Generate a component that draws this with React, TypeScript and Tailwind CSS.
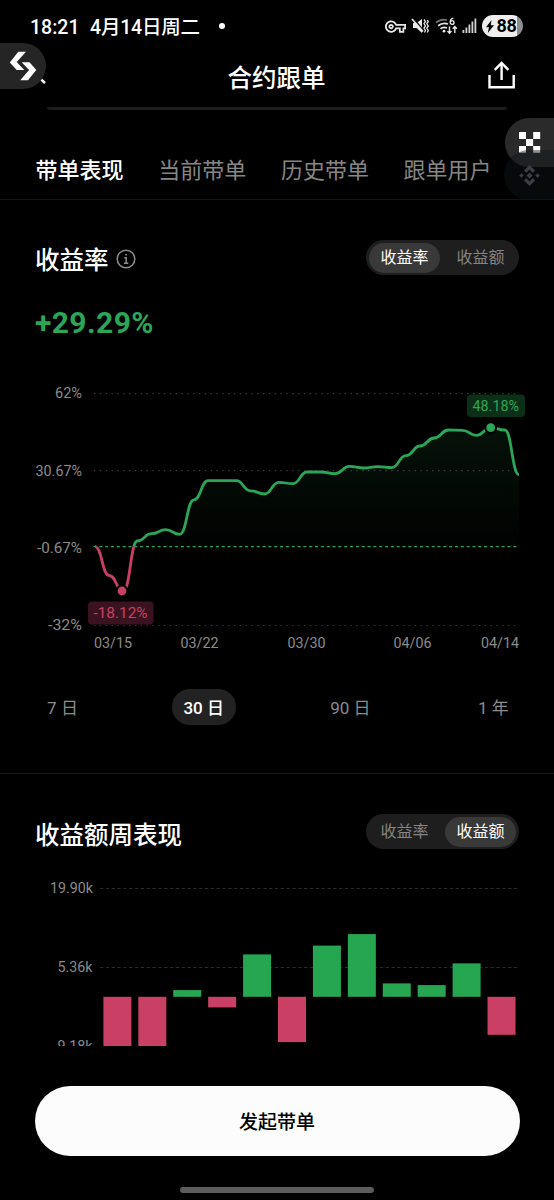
import { useState } from "react";
import { MdOutlineVpnKey } from "react-icons/md";

const GREEN = "#2ba656";
const PINK = "#c94064";

const tabs = ["带单表现", "当前带单", "历史带单", "跟单用户"];

// y position of the curve for each day, 03/15 - 04/14
const curve = [
  546.7, 575.5, 591, 541, 533.7, 529.7, 534.3, 499.8, 480.7, 480.7, 480.7,
  490.8, 494, 482.3, 483.7, 472, 472, 473.7, 466.3, 468, 466.7, 467.7, 455.6,
  446, 438, 430, 430.3, 435.3, 427.7, 430, 474.7,
];

const CHART_LEFT = 95;
const STEP = (519 - CHART_LEFT) / (curve.length - 1);
const ZERO_Y = 546.6;

const linePath = curve
  .map((y, i) => {
    const x = CHART_LEFT + i * STEP;
    if (i === 0) return `M${x} ${y}`;
    const mid = x - STEP / 2;
    return `C${mid} ${curve[i - 1]} ${mid} ${y} ${x} ${y}`;
  })
  .join(" ");

const yLabels = [
  { text: "62%", x: 55, width: 27, y: 398.3, line: 393.7 },
  { text: "30.67%", x: 35.5, width: 46.5, y: 475.8, line: 470.7 },
  { text: "-0.67%", x: 37, width: 45, y: 552.5, line: 0 },
  { text: "-32%", x: 48, width: 34, y: 630.2, line: 625.5 },
];

const xLabels = [
  { text: "03/15", x: 94 },
  { text: "03/22", x: 180.5 },
  { text: "03/30", x: 287.5 },
  { text: "04/06", x: 393.5 },
  { text: "04/14", x: 481 },
];

const periods = [
  { label: "7 日", box: "w-[61px]" },
  { label: "30 日", box: "w-[64px]" },
  { label: "90 日", box: "w-[64px]" },
  { label: "1 年", box: "w-[61px]" },
];

// positive values go up from the zero line, negative go down
const bars = [-60, -60, 6.7, -10.6, 42.4, -45.3, 51.2, 62.7, 13.4, 11.7, 33.4, -38];

function StatusBar() {
  return (
    <div className="flex h-[52px] items-center pl-[30px] pr-[31px]">
      <span className="mt-[4px] w-[60px] whitespace-pre text-[19.5px] font-medium">18:21</span>
      <span className="mt-[4px] whitespace-nowrap text-[19.5px] font-medium tracking-[-0.2px]">4月14日周二</span>
      <span className="ml-[19px] h-1.5 w-1.5 rounded-full bg-white" />
      <div className="ml-auto flex items-center">
        <MdOutlineVpnKey className="h-[21px] w-[21px] text-[#e8e8e8]" />
        <svg className="ml-[5px]" width="18" height="18" viewBox="0 0 18 18" fill="none">
          <path d="M2 6h3.5L11 2v14l-5.500-5H2z" fill="#e8e8e8" />
          <path d="M2.500 1.500l10 12" stroke="#000" strokeWidth="1.500" />
          <path d="M1 2l11 12.500" stroke="#e8e8e8" strokeWidth="1.700" />
          <path d="M13 2.500l1.500 2-1.500 2 1.500 2.500-1.500 2 1.500 2.500-1 2M16.300 3l1 1.500-1.500 2 1.500 2.500-1.500 2 1.500 2.500-1 2" stroke="#e8e8e8" strokeWidth="1.300" />
        </svg>
        <svg className="ml-[6px]" width="23" height="20" viewBox="0 0 23 20" fill="none">
          <path d="M1 6.500Q6 2.600 12 4" stroke="#777" strokeWidth="1.700" />
          <path d="M3.200 9.800Q7.500 6.200 13 8M5.500 12.800Q8.500 10.500 12 12" stroke="#e8e8e8" strokeWidth="1.800" />
          <circle cx="9" cy="15.200" r="1.400" fill="#e8e8e8" />
          <path d="M18.500 2.400Q15.500 2 15.200 6M15.200 6.500a1.900 1.900 0 1 0 3.800 0a1.900 1.900 0 1 0-3.800 0" stroke="#e8e8e8" strokeWidth="1.400" />
          <path d="M14.500 10.500v6.500M12.500 15l2 2.200 2-2.200M19.800 17v-6.300M17.800 12.700l2-2.200 2 2.200" stroke="#e8e8e8" strokeWidth="1.400" />
        </svg>
        <svg className="ml-[4px]" width="15" height="16" viewBox="0 0 15 16" fill="#d0d0d0">
          <rect x="0.500" y="12" width="1.800" height="3" />
          <rect x="3.500" y="9.500" width="1.800" height="5.500" />
          <rect x="6.500" y="6.500" width="1.800" height="8.500" />
          <rect x="9.500" y="3.500" width="1.800" height="11.500" />
          <rect x="12.500" y="0.500" width="1.800" height="14.500" />
        </svg>
        <div className="ml-[5px] flex h-[22px] w-[41px] items-center rounded-full bg-[linear-gradient(90deg,#efefef_35px,#8e8e8e_35px)] pl-[3.500px] text-black">
          <svg width="8" height="13" viewBox="0 0 8 13" fill="#000">
            <path d="M5.500 0L0 7.300h3L1.800 13 8 5.300H4.800z" />
          </svg>
          <span className="ml-[3px] text-[18px] font-bold leading-none tracking-[-0.3px]">88</span>
        </div>
      </div>
    </div>
  );
}

function Toggle({ value, onChange }: { value: number; onChange: (v: number) => void }) {
  return (
    <div className="flex h-[35px] w-[153px] items-center justify-between rounded-full bg-[#1e1e1e] px-[3px] text-[16px]">
      {["收益率", "收益额"].map((label, i) => (
        <button
          key={label}
          onClick={() => onChange(i)}
          className={`h-[30px] w-[71px] rounded-full leading-[30px] ${
            value === i ? "bg-[#393939] text-white" : "text-[#858585]"
          }`}
        >
          {label}
        </button>
      ))}
    </div>
  );
}

function ReturnChart() {
  return (
    <svg width="554" height="280" viewBox="0 380 554 280" className="block" fontSize="15" fill="#8b8b8b">
      <defs>
        <clipPath id="above">
          <rect x="93" y="380" width="426.500" height={ZERO_Y - 380} />
        </clipPath>
        <clipPath id="below">
          <rect x="93" y={ZERO_Y} width="426.500" height="80" />
        </clipPath>
        <linearGradient id="area" gradientUnits="userSpaceOnUse" x1="0" y1="428" x2="0" y2={ZERO_Y}>
          <stop offset="0" stopColor={GREEN} stopOpacity="0.110" />
          <stop offset="1" stopColor={GREEN} stopOpacity="0.010" />
        </linearGradient>
      </defs>

      {yLabels.map((l) => (
        <g key={l.text}>
          <text x={l.x} y={l.y} textLength={l.width} lengthAdjust="spacingAndGlyphs">{l.text}</text>
          {l.line > 0 && (
            <line x1="94" x2="519" y1={l.line} y2={l.line} stroke="#3a3a3a" strokeWidth="1.200" strokeDasharray="1.400 4.430" />
          )}
        </g>
      ))}

      <path d={`${linePath} V${ZERO_Y} H${CHART_LEFT} Z`} fill="url(#area)" clipPath="url(#above)" />
      <line x1="93.500" x2="519" y1={ZERO_Y} y2={ZERO_Y} stroke={GREEN} strokeWidth="1.400" strokeDasharray="3 2.830" />
      <path d={linePath} fill="none" stroke={GREEN} strokeWidth="2.800" clipPath="url(#above)" />
      <path d={linePath} fill="none" stroke={PINK} strokeWidth="2.800" clipPath="url(#below)" />

      <circle cx="122" cy="591" r="5.400" fill={PINK} stroke="#000" strokeWidth="2" />
      <circle cx="490.700" cy="427.700" r="5.400" fill={GREEN} stroke="#000" strokeWidth="2" />

      <rect x="88" y="601.500" width="65.500" height="23" rx="4" fill="#3b1320" />
      <text x="93.500" y="618.300" fill={PINK} textLength="54" lengthAdjust="spacingAndGlyphs">-18.12%</text>
      <rect x="467" y="394.500" width="58" height="22.500" rx="4" fill="#0c2f18" />
      <text x="472.500" y="411.200" fill={GREEN} textLength="46.500" lengthAdjust="spacingAndGlyphs">48.18%</text>

      {xLabels.map((l) => (
        <text key={l.text} x={l.x} y="647.500" textLength="38" lengthAdjust="spacingAndGlyphs">{l.text}</text>
      ))}
    </svg>
  );
}

function WeeklyChart() {
  return (
    <svg width="554" height="165.500" viewBox="0 880 554 165.500" className="block" fontSize="15" fill="#8b8b8b">
      <text x="50" y="893.300" textLength="43" lengthAdjust="spacingAndGlyphs">19.90k</text>
      <text x="57.500" y="972.300" textLength="35" lengthAdjust="spacingAndGlyphs">5.36k</text>
      <text x="57.500" y="1051" textLength="35" lengthAdjust="spacingAndGlyphs">9.18k</text>
      {[888.5, 967.5].map((y) => (
        <line key={y} x1="100" x2="519" y1={y} y2={y} stroke="#292929" strokeDasharray="3.300 2.530" />
      ))}
      {bars.map((v, i) => (
        <rect
          key={i}
          x={103.4 + i * 34.92}
          y={v > 0 ? 996.8 - v : 996.8}
          width="28"
          height={Math.abs(v)}
          fill={v > 0 ? "#27a652" : PINK}
        />
      ))}
    </svg>
  );
}

function FloatingButtons() {
  return (
    <>
      <div className="absolute left-0 top-[43px] h-[46px] w-[46px] rounded-r-full bg-[#252525]">
        <svg width="46" height="46" viewBox="0 43 46 46" fill="#fff">
          <path d="M18.300 51.700H26L16.700 62l7.600 8h-7.600L9.800 62.400z" />
          <path d="M21.700 62.200h7.800l6.800 7.700L28 80.300h-7.800l8.900-10.200z" />
        </svg>
      </div>
      <div className="absolute right-0 top-[118px] h-[49px] w-[49px] rounded-l-full bg-[#2a2a2a]">
        <svg className="ml-[13.500px] mt-[14px]" width="22" height="21" viewBox="0 0 22 21" fill="#fff">
          <path d="M0 0h7v7H0zM14.200 0h7v7h-7zM7.100 7h7v7h-7zM0 14h7v6.800H0zM14.200 14h7v6.800h-7z" />
        </svg>
      </div>
      <div className="absolute right-0 top-[150px] h-[50px] w-[50px] rounded-l-full bg-[#101317]/45">
        <svg className="ml-[15px] mt-[15px]" width="21" height="21" viewBox="0 0 21 21" fill="#3a3e45">
          <path d="M10.500 0l5.600 5.600-2.300 2.300-3.300-3.300-3.300 3.300-2.300-2.300zM10.500 21l5.600-5.600-2.300-2.300-3.300 3.300-3.300-3.300-2.300 2.300zM2.500 8.200l2.300 2.300-2.300 2.300L.2 10.500zM18.500 8.200l2.300 2.300-2.300 2.300-2.300-2.300zM10.500 7.500l3 3-3 3-3-3z" />
        </svg>
      </div>
    </>
  );
}

export default function App() {
  const [tab, setTab] = useState(0);
  const [rateMode, setRateMode] = useState(0);
  const [weekMode, setWeekMode] = useState(1);
  const [period, setPeriod] = useState(1);

  return (
    <div className="relative flex h-[1200px] w-[554px] flex-col overflow-hidden bg-black font-[Roboto,'Noto_Sans_CJK_SC',sans-serif] text-white">
      <StatusBar />

      <header className="flex h-[55px] items-start justify-between pl-[38px] pr-[39px]">
        <svg className="mt-[7px]" width="28" height="30" viewBox="0 0 28 30" fill="none">
          <path d="M-4 14l11 10" stroke="#fff" strokeWidth="2.500" />
        </svg>
        <h1 className="mt-[9px] text-[24.500px] font-medium leading-[36px]">合约跟单</h1>
        <svg className="mt-[8px]" width="28" height="30" viewBox="0 0 28 30" fill="none" stroke="#fff" strokeWidth="2.400">
          <path d="M2.500 15v12.300h24.200V15M14.600 20V3M7.800 9.800l6.800-6.800 6.800 6.800" />
        </svg>
      </header>
      <div className="mx-[47px] h-[3px] shrink-0 rounded-b-full bg-[#1c1c1c]" />

      <nav className="flex h-[90px] shrink-0 items-end gap-[34.700px] border-b border-[#141414] pb-[12px] pl-[35.500px] text-[22px] leading-[32px]">
        {tabs.map((t, i) => (
          <button
            key={t}
            onClick={() => setTab(i)}
            className={`whitespace-nowrap ${tab === i ? "font-medium text-white" : "text-[#868686]"}`}
          >
            {t}
          </button>
        ))}
      </nav>

      <section className="flex h-[574px] shrink-0 flex-col border-b border-[#191919]">
        <div className="mt-[40px] flex h-[35px] items-center justify-between pl-[35px] pr-[35px]">
          <div className="flex items-center">
            <h2 className="mt-[6px] text-[24.500px] font-medium leading-[36px]">收益率</h2>
            <svg className="ml-[7px] mt-[3px]" width="20" height="20" viewBox="0 0 20 20" fill="none" stroke="#8d8d8d" strokeWidth="1.500">
              <circle cx="10" cy="10" r="8.800" />
              <path d="M8.200 8.800h2v5.400M8 14.200h4.300M9.200 5.800h1.800" />
            </svg>
          </div>
          <Toggle value={rateMode} onChange={setRateMode} />
        </div>
        <div className="mt-[28px] h-[41px] pl-[35px] text-[30px] font-bold leading-[40px] tracking-[0.4px] text-[#2ba656]">+29.29%</div>
        <div className="mt-[36px]">
          <ReturnChart />
        </div>
        <div className="mt-[29px] flex h-[36px] items-center justify-between pl-[32px] pr-[30px] text-[17px]">
          {periods.map((p, i) => (
            <button
              key={p.label}
              onClick={() => setPeriod(i)}
              className={`h-[36px] rounded-full leading-[38px] ${p.box} ${
                period === i ? "relative -left-[2px] bg-[#222] font-medium text-white" : "text-[#8b8b8b]"
              }`}
            >
              {p.label}
            </button>
          ))}
        </div>
      </section>

      <section className="shrink-0">
        <div className="mt-[40px] flex h-[35px] items-center justify-between pl-[35px] pr-[35px]">
          <h2 className="mt-[9px] text-[24.500px] font-medium leading-[36px]">收益额周表现</h2>
          <Toggle value={weekMode} onChange={setWeekMode} />
        </div>
        <div className="mt-[31px]">
          <WeeklyChart />
        </div>
      </section>

      <footer className="mt-auto flex h-[114px] shrink-0 flex-col items-center">
        <button className="h-[69.500px] w-[485px] rounded-full bg-[#fcfcfc] text-[19px] font-medium leading-[74px] text-black">
          发起带单
        </button>
        <div className="mt-[31px] h-[6px] w-[194px] rounded-full bg-[#5c5c5c]" />
      </footer>

      <FloatingButtons />
    </div>
  );
}
